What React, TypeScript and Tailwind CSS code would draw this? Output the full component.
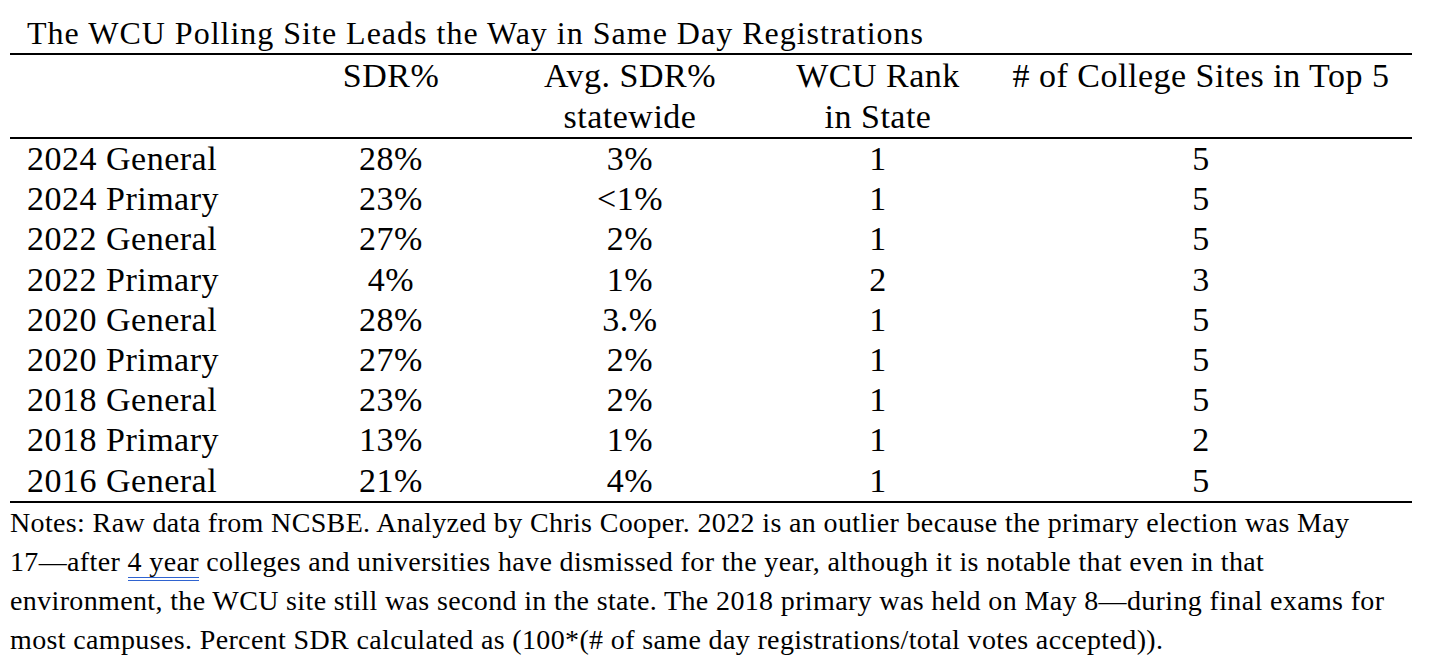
const rows = [
  ["2024 General", "28%", "3%", "1", "5"],
  ["2024 Primary", "23%", "<1%", "1", "5"],
  ["2022 General", "27%", "2%", "1", "5"],
  ["2022 Primary", "4%", "1%", "2", "3"],
  ["2020 General", "28%", "3.%", "1", "5"],
  ["2020 Primary", "27%", "2%", "1", "5"],
  ["2018 General", "23%", "2%", "1", "5"],
  ["2018 Primary", "13%", "1%", "1", "2"],
  ["2016 General", "21%", "4%", "1", "5"],
]

const cols = "grid grid-cols-[262px_238px_240px_256px_390px]"

export default function App() {
  return (
    <div className="min-h-[666px] w-[1430px] bg-white text-black font-['Liberation_Serif',serif]">
      <div className="ml-[10px] w-[1402px]">
        <div className="pl-[17px] pt-[14px] text-[32px] tracking-[1px] leading-[39px] whitespace-nowrap">
          The WCU Polling Site Leads the Way in Same Day Registrations
        </div>

        <div className="border-y-2 border-black text-[34px] tracking-[0.5px]">
          {/* header */}
          <div className={`${cols} leading-[41px] border-b-2 border-black h-[84px]`}>
            <div />
            <div className="text-center">SDR%</div>
            <div className="text-center">
              Avg. SDR%
              <br />
              statewide
            </div>
            <div className="text-center">
              WCU Rank
              <br />
              in State
            </div>
            <div className="text-center whitespace-nowrap">
              # of College Sites in Top 5
            </div>
          </div>

          {/* body */}
          <div>
            {rows.map((r) => (
              <div key={r[0]} className={`${cols} leading-[40.2px]`}>
                <div className="pl-[17px] whitespace-nowrap">{r[0]}</div>
                <div className="text-center">{r[1]}</div>
                <div className="text-center">{r[2]}</div>
                <div className="text-center">{r[3]}</div>
                <div className="text-center">{r[4]}</div>
              </div>
            ))}
          </div>
        </div>

        <div className="text-[28px] tracking-[0.36px] leading-[39px] whitespace-nowrap">
          <div>
            Notes: Raw data from NCSBE. Analyzed by Chris Cooper. 2022 is an outlier because the primary election was May
          </div>
          <div>
            17—after{" "}
            <span className="border-b-[4px] border-double border-[#2f63d0]">4 year</span>{" "}
            colleges and universities have dismissed for the year, although it is notable that even in that
          </div>
          <div>
            environment, the WCU site still was second in the state. The 2018 primary was held on May 8—during final exams for
          </div>
          <div>
            most campuses. Percent SDR calculated as (100*(# of same day registrations/total votes accepted)).
          </div>
        </div>
      </div>
    </div>
  )
}
